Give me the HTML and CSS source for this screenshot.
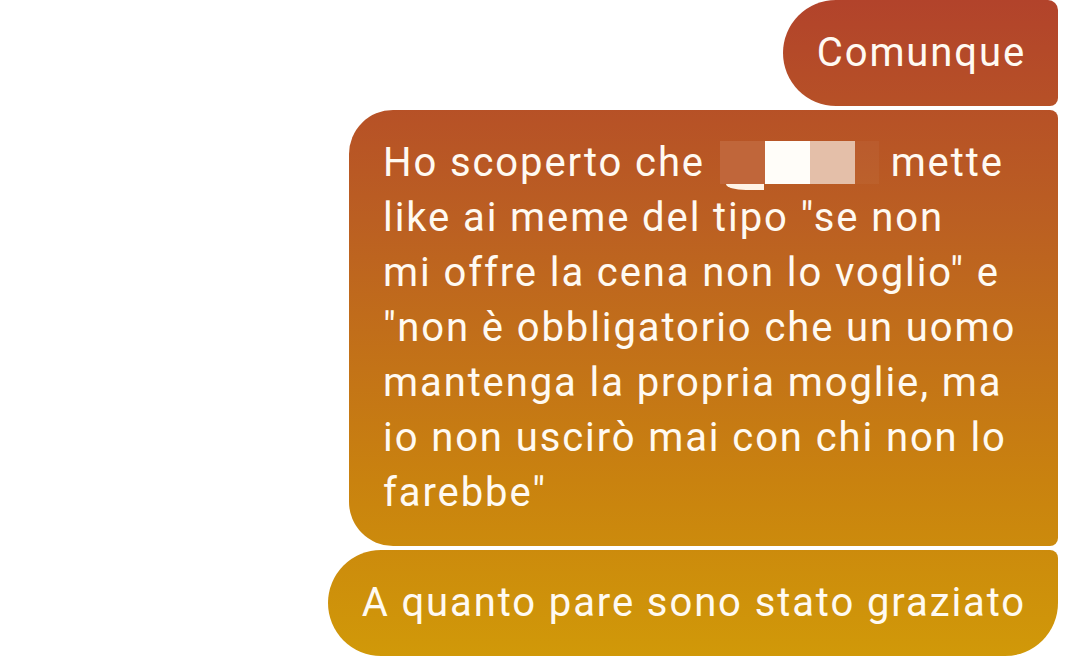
FILE: index.html
```html
<!DOCTYPE html>
<html lang="it">
<head>
    <meta charset="UTF-8">
    <meta name="viewport" content="width=device-width, initial-scale=1.0">
    <title>Chat</title>
    <link rel="stylesheet" href="styles.css">
</head>
<body>
    <div class="thread">
        <div class="bubble first">Comunque</div>
        <div class="bubble middle">Ho scoperto che <span class="hidden-name"><span class="px px-a"></span><span class="px px-b"></span><span class="px px-c"></span></span> mette<br>like ai meme del tipo "se non<br>mi offre la cena non lo voglio" e<br>"non è obbligatorio che un uomo<br>mantenga la propria moglie, ma<br>io non uscirò mai con chi non lo<br>farebbe"</div>
        <div class="bubble last">A quanto pare sono stato graziato</div>
    </div>
</body>
</html>
```

FILE: styles.css
```css
body {
    margin: 0;
    background-color: white;
    font-family: Roboto, "Liberation Sans", sans-serif;
}
.thread {
    display: flex;
    flex-direction: column;
    align-items: flex-end;
    gap: 4px;
    padding-right: 22px;
}
.bubble {
    box-sizing: border-box;
    padding: 25px 32px 26px 34px;
    font-size: 40px;
    letter-spacing: 1.9px;
    line-height: 55px;
    color: #fffaf2;
    white-space: nowrap;
    background-image: linear-gradient(to bottom, #b2432b 0px, #bb5f22 220px, #c9820f 480px, #d19a08 665px);
    background-attachment: fixed;
}
.first {
    border-radius: 53px 10px 8px 53px;
}
.middle {
    width: 709px;
    border-radius: 44px 8px 8px 44px;
}
.last {
    border-radius: 53px 8px 53px 53px;
}
.hidden-name {
    display: inline-flex;
    position: relative;
    vertical-align: -8px;
    height: 43px;
    margin: 0 0 0 3px;
    padding-right: 24px;
    background: rgba(255, 255, 255, 0.04);
}
.px {
    display: block;
    width: 45px;
    height: 43px;
}
.px-a {
    background: #c0663a;
}
.px-b {
    background: #fffdf9;
}
.px-c {
    background: #e4bfa9;
}
.px-a::after {
    content: "";
    position: absolute;
    left: 6px;
    top: 43px;
    width: 38px;
    height: 6px;
    border-bottom-left-radius: 20px 6px;
    background: #fff3e6;
}
```
